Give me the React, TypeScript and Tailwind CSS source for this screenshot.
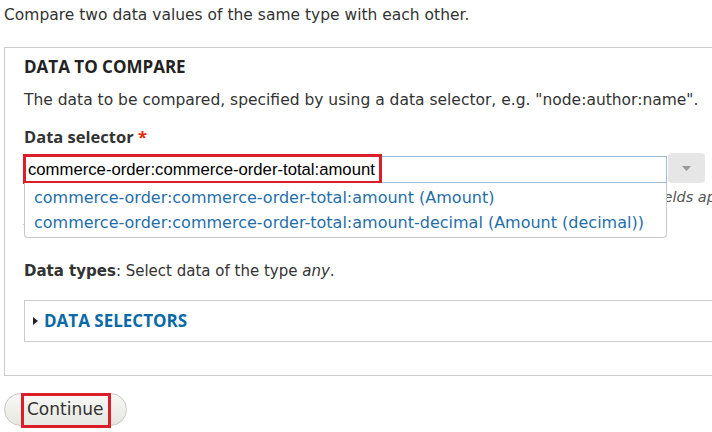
export default function App() {
  const body = { fontFamily: '"DejaVu Sans", Verdana, sans-serif' };
  const heading = { fontFamily: '"Open Sans", "Segoe UI", sans-serif' };
  const arial = { fontFamily: '"Liberation Sans", Arial, sans-serif' };

  return (
    <div className="w-[712px] h-[432px] overflow-hidden bg-white text-[#333] pl-[4px]" style={body}>
      <p className="h-[32px] flex items-center text-[15.5px] whitespace-nowrap">
        Compare two data values of the same type with each other.
      </p>

      <fieldset className="mt-[15px] w-[760px] border border-[#ccc] px-[19px] pb-[33px]">
        <h2 className="mt-[9px] leading-[20px] text-[17px] font-bold uppercase text-[#222]" style={heading}>
          Data to compare
        </h2>
        <p className="mt-[13px] leading-[20px] text-[15.5px] whitespace-nowrap">
          The data to be compared, specified by using a data selector, e.g. "node:author:name".
        </p>
        <label className="block mt-[17px] leading-[20px] text-[16.5px] font-bold" style={heading}>
          Data selector <span className="text-[#e62600]">*</span>
        </label>

        <div className="relative mt-[6px] h-[30px] flex items-end">
          <div className="relative w-[643px] h-[27px] border border-[#9fbcd9] bg-white flex items-center pl-[3px] text-[16.7px] text-black" style={arial}>
            commerce-order:commerce-order-total:amount
            <div className="absolute left-[-2px] top-[-3px] w-[359px] h-[30px] border-[3px] border-[#dc1e2b]" />
          </div>
          <div className="ml-[1px] w-[37px] h-[30px] rounded-[4px] bg-[#e6e6e6] flex items-center justify-center">
            <svg width="9" height="5" viewBox="0 0 9 5">
              <path d="M0 0h9L4.5 5z" fill="#9a9a9a" />
            </svg>
          </div>

          <ul className="absolute left-0 top-full z-10 w-[643px] h-[55px] bg-white border border-t-0 border-[#c8c8c8] rounded-b-[4px] pl-[9px] pt-[2px] text-[16px] text-[#1f6ea9] leading-[25px]">
            <li>commerce-order:commerce-order-total:amount (Amount)</li>
            <li>commerce-order:commerce-order-total:amount-decimal (Amount (decimal))</li>
          </ul>
        </div>

        <div className="mt-[4px] leading-[20px] text-[14.5px] italic text-[#555] whitespace-nowrap">
          <div>The data selector helps you drill down into the data available to Rules. To make entity fields appear in the data selector,</div>
          <div>you may have to use the condition 'entity has field' (or 'content is of type').</div>
        </div>

        <p className="mt-[34px] leading-[20px] text-[15px]">
          <span className="font-bold">Data types</span>: Select data of the type <em>any</em>.
        </p>

        <div className="mt-[19px] h-[42px] border border-[#ccc] flex items-center pl-[8px]">
          <svg width="5" height="8" viewBox="0 0 5 8" className="mr-[6px]">
            <path d="M0 0l5 4-5 4z" fill="#222" />
          </svg>
          <span className="text-[17px] font-bold uppercase text-[#0a6aa8]" style={heading}>Data selectors</span>
        </div>
      </fieldset>

      <div className="relative mt-[17px] w-[123px] h-[33px]">
        <button className="w-full h-full rounded-full border border-[#c9c9c3] bg-gradient-to-b from-[#f8f8f6] to-[#e6e6e2] text-[17px] text-[#333] flex items-center pl-[22px]">
          Continue
        </button>
        <div className="absolute left-[17px] top-0 w-[90px] h-[35px] border-[3px] border-[#dc1e2b]" />
      </div>
    </div>
  );
}
